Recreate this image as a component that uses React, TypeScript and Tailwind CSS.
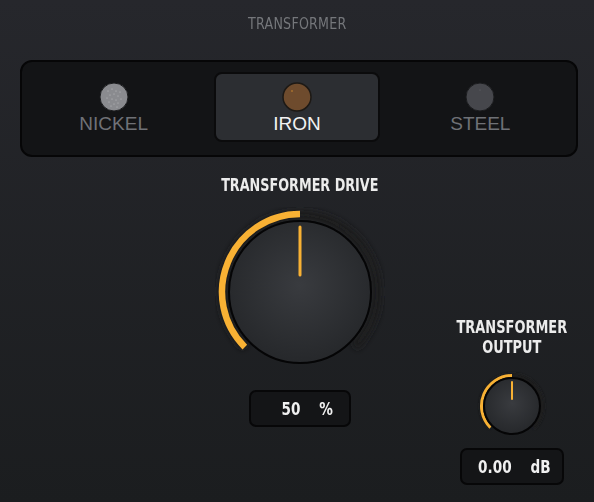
import React from 'react'

const dejavu = { fontFamily: '"DejaVu Sans", sans-serif' }
const ORANGE = '#f8b134'

function arcPath(cx: number, cy: number, r: number, a0: number, a1: number) {
  const rad = (a: number) => (a * Math.PI) / 180
  const x0 = cx + r * Math.sin(rad(a0))
  const y0 = cy - r * Math.cos(rad(a0))
  const x1 = cx + r * Math.sin(rad(a1))
  const y1 = cy - r * Math.cos(rad(a1))
  const large = a1 - a0 > 180 ? 1 : 0
  return `M ${x0} ${y0} A ${r} ${r} 0 ${large} 1 ${x1} ${y1}`
}

interface KnobProps {
  size: number
  arcR: number
  arcW: number
  bodyR: number
  tick: [number, number]
  tickW: number
  id: string
}

function Knob({ size, arcR, arcW, bodyR, tick, tickW, id }: KnobProps) {
  const c = size / 2
  return (
    <svg width={size} height={size} viewBox={`0 0 ${size} ${size}`}>
      <defs>
        <radialGradient id={`${id}-body`} cx="50%" cy="45%" r="55%">
          <stop offset="0%" stopColor="#393b3f" />
          <stop offset="100%" stopColor="#26282b" />
        </radialGradient>
        <filter id={`${id}-blur`} x="-20%" y="-20%" width="140%" height="140%">
          <feGaussianBlur stdDeviation={arcW / 2} />
        </filter>
      </defs>
      <path
        d={arcPath(c, c, arcR - 1, -135, 135)}
        stroke="#1b1c1e"
        strokeWidth={arcW + 3}
        fill="none"
        filter={`url(#${id}-blur)`}
      />
      <path d={arcPath(c, c, arcR, -135, 0)} stroke={ORANGE} strokeWidth={arcW} fill="none" />
      <circle cx={c} cy={c} r={bodyR} fill={`url(#${id}-body)`} stroke="#050506" strokeWidth={2} />
      <line
        x1={c}
        y1={c + tick[0]}
        x2={c}
        y2={c + tick[1]}
        stroke={ORANGE}
        strokeWidth={tickW}
        strokeLinecap="round"
      />
    </svg>
  )
}

function Swatch({ kind }: { kind: 'nickel' | 'iron' | 'steel' }) {
  if (kind === 'nickel') {
    return (
      <svg width="30" height="30" viewBox="0 0 30 30">
        <circle cx="15" cy="15" r="14" fill="#8a8b8f" stroke="#1b1c1e" strokeWidth="1" />
        {[
          [9, 9], [13, 7], [17, 9], [11, 13], [15, 12], [19, 14], [8, 16], [13, 17],
          [17, 18], [21, 10], [10, 20], [15, 22], [19, 21], [22, 17], [12, 24], [18, 25],
        ].map(([x, y], i) => (
          <circle key={i} cx={x} cy={y} r="0.5" fill="#c9cacd" />
        ))}
      </svg>
    )
  }
  if (kind === 'iron') {
    return (
      <svg width="30" height="30" viewBox="0 0 30 30">
        <circle cx="15" cy="15" r="14" fill="#6e4b2d" stroke="#1d1915" strokeWidth="1.5" />
        <circle cx="10" cy="9" r="0.8" fill="#d08a2e" />
      </svg>
    )
  }
  return (
    <svg width="30" height="30" viewBox="0 0 30 30">
      <circle cx="15" cy="15" r="14" fill="#46474c" stroke="#1b1c1e" strokeWidth="1" />
      <circle cx="15" cy="8" r="0.4" fill="#8a8b90" />
    </svg>
  )
}

const materials = [
  { key: 'nickel' as const, label: 'NICKEL' },
  { key: 'iron' as const, label: 'IRON' },
  { key: 'steel' as const, label: 'STEEL' },
]

function ValueBox({ value, unit, className }: { value: string; unit: string; className: string }) {
  return (
    <div
      className={`${className} h-[37px] rounded-[7px] border-2 border-[#070708] bg-[#141517] flex items-center justify-center`}
    >
      <span
        className="inline-block scale-x-[0.8] text-[17px] leading-[20px] font-bold text-[#f0f0f0] whitespace-pre"
        style={dejavu}
      >
        {value}
        {'    '}
        {unit}
      </span>
    </div>
  )
}

export default function App() {
  const selected = 'iron'
  return (
    <div className="w-[594px] h-[502px] overflow-hidden bg-gradient-to-b from-[#26272c] to-[#1b1d1f] flex flex-col">
      <div className="pt-[14px] flex justify-center">
        <span
          className="inline-block scale-x-[0.79] text-[16px] leading-[20px] text-[#75777b] tracking-[0.3px]"
          style={dejavu}
        >
          TRANSFORMER
        </span>
      </div>

      <div className="mt-[26px] ml-[20px] mr-[16px] h-[97px] rounded-[12px] border-2 border-[#060607] bg-[#131416] pr-[4px] pt-[10px] grid grid-cols-3">
        {materials.map(m => {
          const active = m.key === selected
          return (
            <div key={m.key} className="flex justify-center">
              <div
                className={
                  'w-[166px] h-[70px] rounded-[8px] flex flex-col items-center pt-[8px] ' +
                  (active ? 'bg-[#2c2e32] border-2 border-[#0b0b0c]' : 'border-2 border-transparent')
                }
              >
                <Swatch kind={m.key} />
                <span
                  className={
                    'mt-[1px] text-[19px] leading-[22px] ' + (active ? 'text-[#f2f2f2]' : 'text-[#6f7176]')
                  }
                  style={{ fontFamily: '"Liberation Sans", Arial, sans-serif' }}
                >
                  {m.label}
                </span>
              </div>
            </div>
          )
        })}
      </div>

      <div className="flex">
        <div className="ml-[200px] w-[200px] flex flex-col items-center">
          <span
            className="mt-[17px] inline-block scale-x-[0.71] text-[18px] leading-[22px] font-bold text-[#ececec] whitespace-nowrap"
            style={dejavu}
          >
            TRANSFORMER DRIVE
          </span>
          <div className="mt-[11px]">
            <Knob id="drive" size={170} arcR={78} arcW={6.5} bodyR={71} tick={[-65, -17]} tickW={3} />
          </div>
          <div className="mt-[13px]">
            <ValueBox value="50" unit="%" className="w-[102px] pl-[14px]" />
          </div>
        </div>

        <div className="ml-[47px] w-[130px] flex flex-col items-center">
          <span
            className="mt-[160px] inline-block scale-x-[0.72] text-[18px] leading-[20px] font-bold text-[#ececec] text-center whitespace-nowrap"
            style={dejavu}
          >
            TRANSFORMER
            <br />
            OUTPUT
          </span>
          <div className="mt-[14px]">
            <Knob id="out" size={70} arcR={30.5} arcW={3} bodyR={28} tick={[-24, -7]} tickW={2} />
          </div>
          <div className="mt-[7px]">
            <ValueBox value="0.00" unit="dB" className="w-[104px] pl-[4px]" />
          </div>
        </div>
      </div>
    </div>
  )
}
